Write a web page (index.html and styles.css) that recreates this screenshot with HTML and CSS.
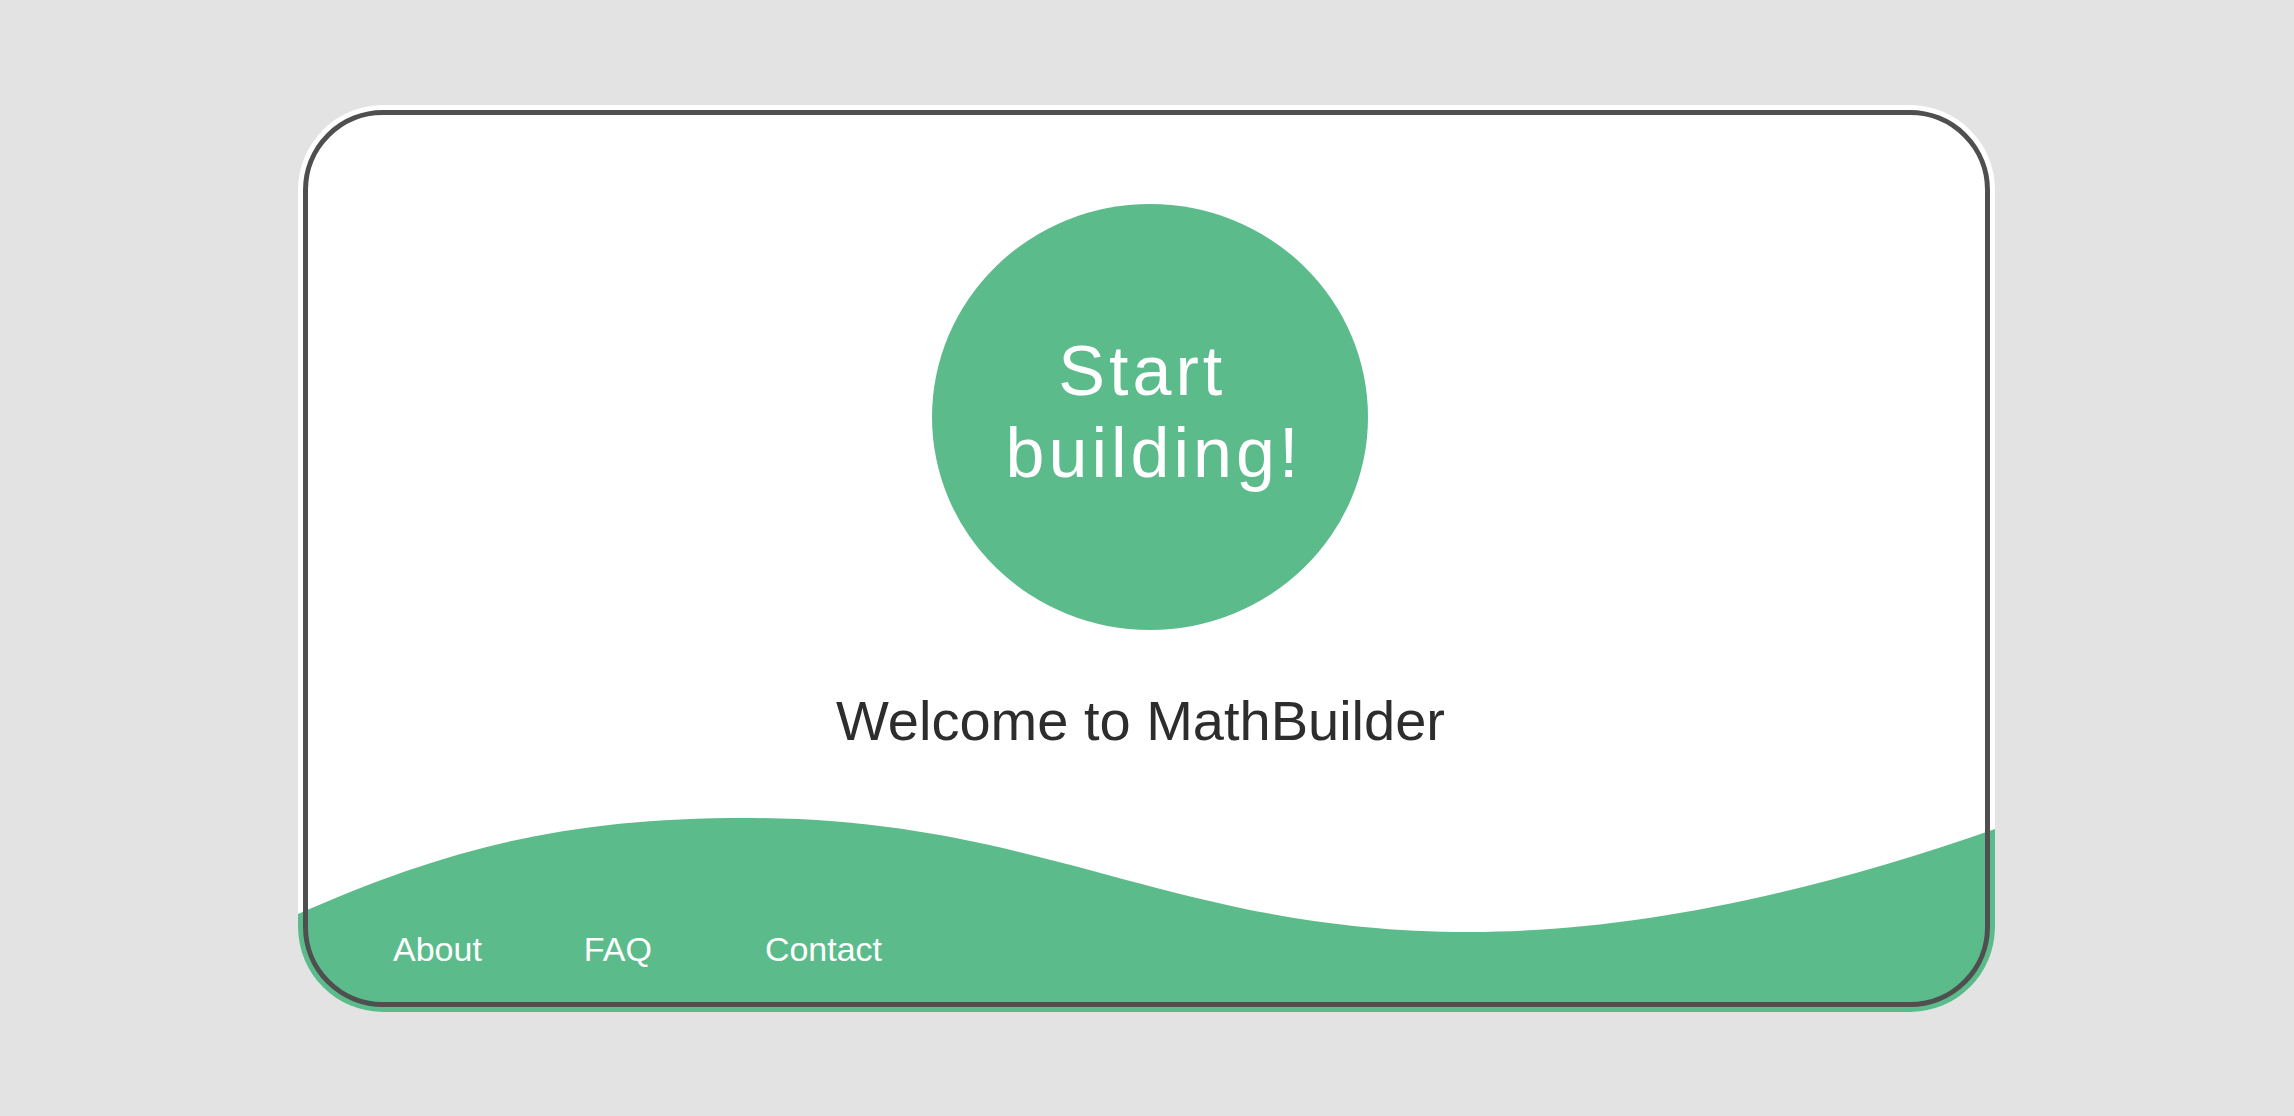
FILE: index.html
```html
<!DOCTYPE html>
<html lang="en">
<head>
<meta charset="utf-8">
<title>MathBuilder</title>
<link rel="stylesheet" href="styles.css">
</head>
<body>
  <main class="card">
    <svg class="wave" viewBox="0 0 1697 907" preserveAspectRatio="none" aria-hidden="true">
      <path d="M0,809 C150,743 268,713 448,713 C748,713 872,827 1172,827 C1322,827 1497,794 1697,724 L1697,907 L0,907 Z" fill="#5cbb8b"/>
    </svg>
    <button class="start">Start&nbsp;<br>building!</button>
    <h1 class="welcome">Welcome to MathBuilder</h1>
    <nav class="nav">
      <a class="nav-link" href="#">About</a>
      <a class="nav-link" href="#">FAQ</a>
      <a class="nav-link" href="#">Contact</a>
    </nav>
  </main>
</body>
</html>
```

FILE: styles.css
```css
html, body {
  margin: 0;
  padding: 0;
}

body {
  background: #e3e3e3;
  font-family: "Liberation Sans", Arial, sans-serif;
  padding: 105px 0 0 298px;
  height: 1116px;
  box-sizing: border-box;
}

.card {
  position: relative;
  isolation: isolate;
  width: 1697px;
  height: 907px;
  background: #ffffff;
  border-radius: 85px;
  overflow: hidden;
  display: flex;
  flex-direction: column;
  align-items: center;
  box-sizing: border-box;
}

.card::after {
  content: "";
  position: absolute;
  top: 5px;
  left: 5px;
  right: 5px;
  bottom: 5px;
  border: 5px solid #4f4f4f;
  border-radius: 80px;
  pointer-events: none;
}

.wave {
  position: absolute;
  top: 0;
  left: 0;
  width: 100%;
  height: 100%;
  z-index: -1;
}

.start {
  margin: 99px 0 0 7px;
  width: 436px;
  height: 426px;
  border: none;
  border-radius: 50%;
  background: #5cbb8b;
  color: #ffffff;
  font-family: "Liberation Sans", Arial, sans-serif;
  font-size: 70px;
  line-height: 82px;
  letter-spacing: 4px;
  padding: 0 0 10px 8px;
  text-align: center;
  cursor: pointer;
}

.welcome {
  margin: 59px 12px 0 0;
  font-size: 56px;
  font-weight: normal;
  line-height: 64px;
  color: #2d2d2d;
}

.nav {
  align-self: flex-start;
  margin-top: auto;
  margin-bottom: 43px;
  padding-left: 95px;
  display: flex;
  gap: 102px;
}

.nav-link {
  color: #ffffff;
  text-decoration: none;
  font-size: 34px;
  line-height: 39px;
}

.nav-link:last-child {
  margin-left: 11px;
}
```
